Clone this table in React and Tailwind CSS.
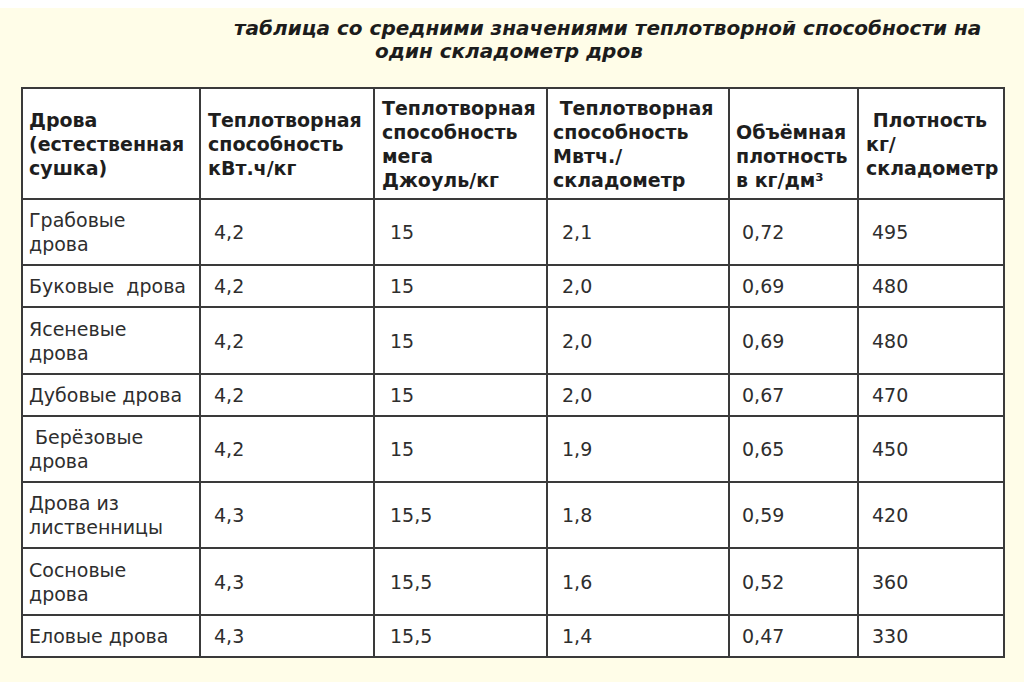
import React from "react";

const rows = [
  { name: ["Грабовые", "дрова"], kwh: "4,2", mj: "15", mwh: "2,1", vol: "0,72", dens: "495", h: "h-[66px]" },
  { name: ["Буковые\u00a0 дрова"], kwh: "4,2", mj: "15", mwh: "2,0", vol: "0,69", dens: "480", h: "h-[42px]" },
  { name: ["Ясеневые", "дрова"], kwh: "4,2", mj: "15", mwh: "2,0", vol: "0,69", dens: "480", h: "h-[67px]" },
  { name: ["Дубовые дрова"], kwh: "4,2", mj: "15", mwh: "2,0", vol: "0,67", dens: "470", h: "h-[42px]" },
  { name: ["\u00a0Берёзовые", "дрова"], kwh: "4,2", mj: "15", mwh: "1,9", vol: "0,65", dens: "450", h: "h-[66px]" },
  { name: ["Дрова из", "лиственницы"], kwh: "4,3", mj: "15,5", mwh: "1,8", vol: "0,59", dens: "420", h: "h-[66px]" },
  { name: ["Сосновые", "дрова"], kwh: "4,3", mj: "15,5", mwh: "1,6", vol: "0,52", dens: "360", h: "h-[67px]" },
  { name: ["Еловые дрова"], kwh: "4,3", mj: "15,5", mwh: "1,4", vol: "0,47", dens: "330", h: "h-[42px]" },
];

const cell = "border-2 border-[#3a3a3a] align-middle";

export default function App() {
  return (
    <div
      className="min-h-[682px] w-[1024px] bg-white"
      style={{ fontFamily: '"DejaVu Sans", Verdana, sans-serif' }}
    >
      <div className="mt-[8px] min-h-[674px] bg-[#fffde8] pt-[9px] pb-[24px]">
        {/* Заголовок */}
        <div className="text-[20px] font-bold italic leading-[23px] text-[#1c1c1c]">
          <div className="pl-[234px]">таблица со средними значениями теплотворной способности на</div>
          <div className="pl-[375px]">один складометр дров</div>
        </div>

        <table className="ml-[21px] mt-[24px] w-[982px] table-fixed border-collapse bg-white text-[19px] leading-[24px] text-[#2e2e2e]">
          <colgroup>
            <col className="w-[178px]" />
            <col className="w-[174px]" />
            <col className="w-[173px]" />
            <col className="w-[182px]" />
            <col className="w-[129px]" />
            <col className="w-[146px]" />
          </colgroup>
          <thead>
            <tr className="h-[111px] text-left font-bold text-[#1e1e1e]">
              <th className={`${cell} pl-[6px] font-bold`}>
                Дрова<br />(естественная<br />сушка)
              </th>
              <th className={`${cell} pl-[7px] font-bold`}>
                Теплотворная<br />способность<br />кВт.ч/кг
              </th>
              <th className={`${cell} pl-[7px] font-bold`}>
                Теплотворная<br />способность<br />мега<br />Джоуль/кг
              </th>
              <th className={`${cell} pl-[5px] font-bold`}>
                {"\u00a0"}Теплотворная<br />способность<br />Мвтч./<br />складометр
              </th>
              <th className={`${cell} pl-[6px] pt-[24px] font-bold`}>
                Объёмная<br />плотность<br />в кг/дм³
              </th>
              <th className={`${cell} pl-[7px] font-bold`}>
                {"\u00a0"}Плотность<br />кг/<br />складометр
              </th>
            </tr>
          </thead>
          <tbody>
            {rows.map((r, i) => (
              <tr key={i} className={r.h}>
                <td className={`${cell} pl-[6px]`}>
                  {r.name.map((n, j) => (
                    <div key={j}>{n}</div>
                  ))}
                </td>
                <td className={`${cell} pl-[13px]`}>{r.kwh}</td>
                <td className={`${cell} pl-[15px]`}>{r.mj}</td>
                <td className={`${cell} pl-[14px]`}>{r.mwh}</td>
                <td className={`${cell} pl-[12px]`}>{r.vol}</td>
                <td className={`${cell} pl-[13px]`}>{r.dens}</td>
              </tr>
            ))}
          </tbody>
        </table>
      </div>
    </div>
  );
}
